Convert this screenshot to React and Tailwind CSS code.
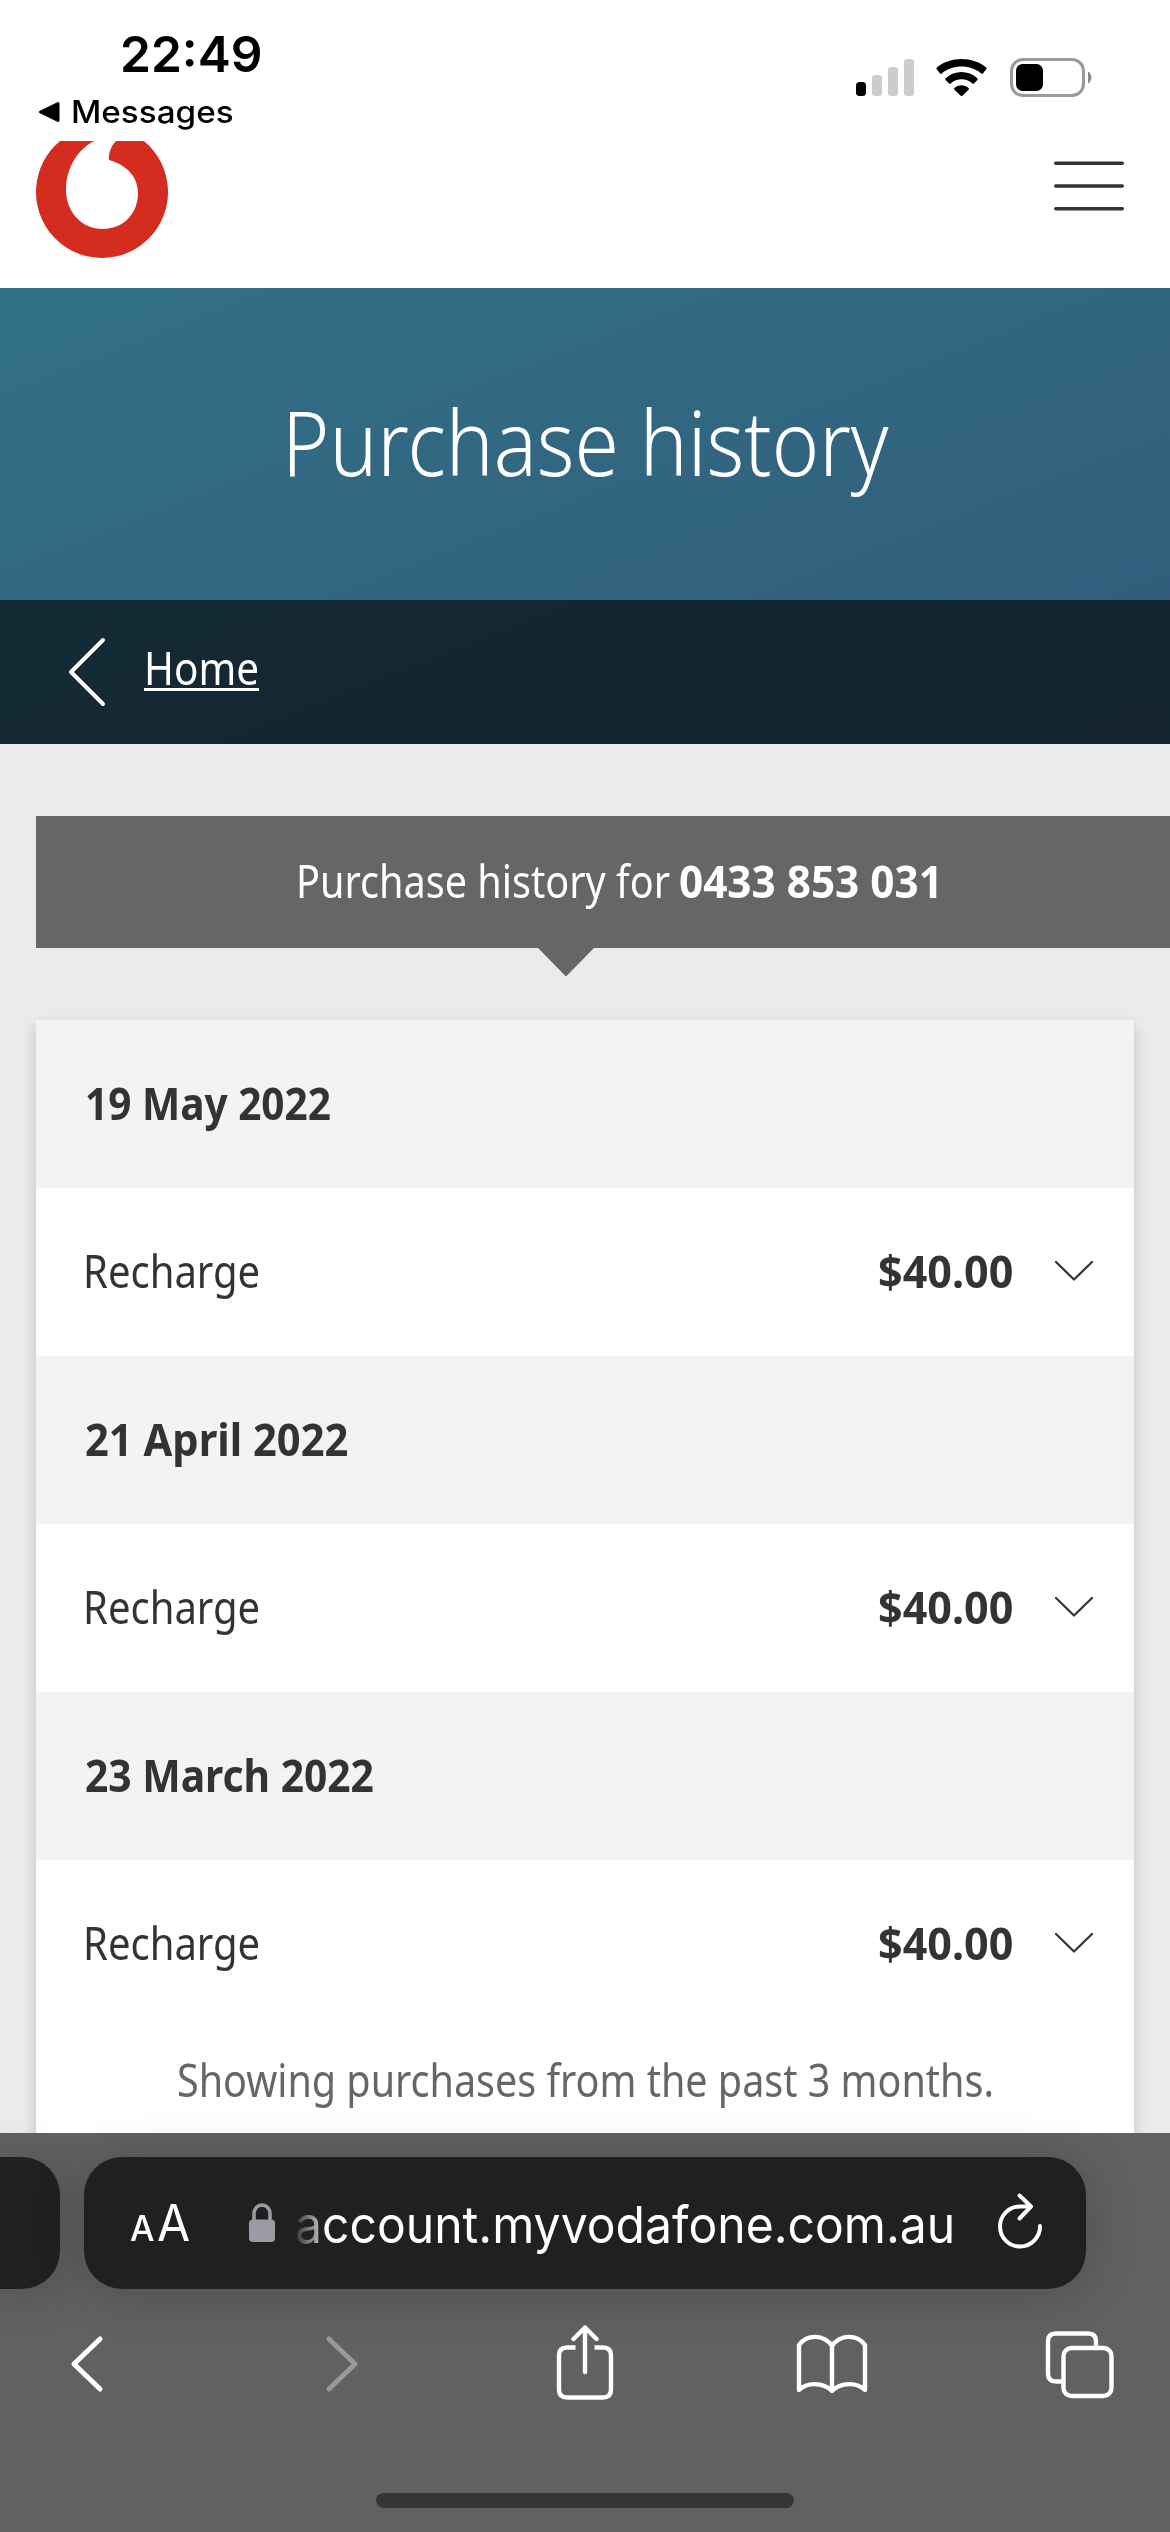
import { useLayoutEffect, useRef, useState } from "react";

/* Condenses a run of text horizontally so that it fills its box. */
function Fit({ className = "", innerClassName = "", children }) {
  const outer = useRef(null);
  const inner = useRef(null);
  const [scale, setScale] = useState(1);
  useLayoutEffect(() => {
    setScale(outer.current.clientWidth / inner.current.offsetWidth);
  }, []);
  return (
    <span ref={outer} className={`block shrink-0 ${className}`}>
      <span
        ref={inner}
        className={`inline-block origin-left whitespace-nowrap ${innerClassName}`}
        style={{ transform: `scaleX(${scale})` }}
      >
        {children}
      </span>
    </span>
  );
}

const purchases = [
  { date: "19 May 2022", dateWidth: "w-[246px]", label: "Recharge", amount: "$40.00" },
  { date: "21 April 2022", dateWidth: "w-[263px]", label: "Recharge", amount: "$40.00" },
  { date: "23 March 2022", dateWidth: "w-[289px]", label: "Recharge", amount: "$40.00" },
];

function StatusBar() {
  return (
    <div className="flex h-[141px] justify-between bg-white font-['Inter',sans-serif] text-black">
      <div className="flex flex-col pt-[24px] pl-[38px]">
        <Fit className="ml-[82px] w-[143px] text-[50px] leading-[60px] font-semibold">22:49</Fit>
        <div className="mt-[8px] flex h-[40px] items-center gap-[11px]">
          <svg width="22" height="22" viewBox="0 0 22 22">
            <path d="M2.5 11 20 2.500V19.500Z" stroke="#000" strokeWidth="3" strokeLinejoin="round" />
          </svg>
          <Fit className="w-[163px] text-[31px] leading-[40px] font-[450]">Messages</Fit>
        </div>
      </div>
      <div className="flex gap-[22px] pt-[57px] pr-[78px]">
        <svg width="58" height="40" viewBox="0 0 58 40">
          <rect x="0" y="25" width="10" height="14" rx="3.500" fill="#000" />
          <rect x="16" y="18" width="10" height="21" rx="3.500" fill="#ccc" />
          <rect x="32" y="10" width="10" height="29" rx="3.500" fill="#ccc" />
          <rect x="48" y="2" width="10" height="37" rx="3.500" fill="#ccc" />
        </svg>
        <svg width="51" height="40" viewBox="0 0 51 40">
          <path d="M.8 12.200a1.200 1.200 0 0 1 0-1.600C14-.9 37-.9 50.200 10.600a1.200 1.200 0 0 1 0 1.600l-3.300 4.200a1.200 1.200 0 0 1-1.700.1C34.500 7.200 16.500 7.200 5.800 16.500a1.200 1.200 0 0 1-1.700-.1Z" />
          <path d="M9.600 22.900a1.200 1.200 0 0 1 .1-1.700c8.800-8.200 22.800-8.200 31.600 0a1.200 1.200 0 0 1 .1 1.700l-3.400 3.600a1.200 1.200 0 0 1-1.700 0c-6.200-5.600-15.400-5.600-21.600 0a1.200 1.200 0 0 1-1.700 0Z" />
          <path d="M18.400 32.800a1.200 1.200 0 0 1 .1-1.700c4-3.700 10-3.700 14 0a1.200 1.200 0 0 1 .1 1.700l-6.200 6a1.200 1.200 0 0 1-1.700 0Z" />
        </svg>
        <svg width="83" height="41" viewBox="0 0 83 41">
          <rect x="2.500" y="2.500" width="72" height="36" rx="11.500" fill="none" stroke="#999" strokeWidth="3" />
          <rect x="7" y="7" width="27" height="27" rx="6.500" fill="#000" />
          <path d="M79 14.500a7 7 0 0 1 0 12Z" fill="#888" />
        </svg>
      </div>
    </div>
  );
}

function SiteHeader() {
  return (
    <header className="flex h-[147px] justify-between bg-white pr-[46px] pl-[36px]">
      <svg width="132" height="118" viewBox="36 141 132 118">
        <path
          d="M60.100 141A66 66 0 1 0 143.900 141H116C111 146 108.500 153 109 160C127 165 138 177 138 193C138 214 123 229 102.500 229C82 229 66 212 66 190C66 170 76 150 94.500 141Z"
          fill="#d42d20"
        />
      </svg>
      <svg className="mt-[18px]" width="70" height="54" viewBox="0 0 70 54">
        <g stroke="#333" strokeWidth="3.400" strokeLinecap="round">
          <path d="M1.700 4.300H68.300M1.700 27H68.300M1.700 49.700H68.300" />
        </g>
      </svg>
    </header>
  );
}

function Purchase({ date, dateWidth, label, amount }) {
  return (
    <section>
      <div className="flex h-[168px] items-center bg-[#f3f3f3] pb-[3px] pl-[49px]">
        <Fit className={dateWidth} innerClassName="font-bold">{date}</Fit>
      </div>
      <div className="flex h-[168px] items-center bg-white pr-[40px] pb-[3px] pl-[47px]">
        <Fit className="w-[177px]">{label}</Fit>
        <Fit className="mr-[41px] ml-auto w-[135px]" innerClassName="font-bold">{amount}</Fit>
        <svg width="40" height="22" viewBox="0 0 40 22" fill="none">
          <path d="M2 2 20 19.500 38 2" stroke="#333" strokeWidth="2.200" strokeLinecap="round" strokeLinejoin="round" />
        </svg>
      </div>
    </section>
  );
}

function BrowserBar() {
  return (
    <footer className="h-[399px] bg-[#616161] pt-[24px] font-['Inter',sans-serif]">
      <div className="flex h-[132px] gap-[24px]">
        <div className="w-[60px] rounded-r-[38px] bg-[#202020] shadow-[0_4px_50px_rgba(0,0,0,0.2)]" />
        <div className="flex w-[1002px] items-center rounded-[38px] bg-[#202020] pl-[46px] text-white shadow-[0_4px_50px_rgba(0,0,0,0.2)]">
          <div className="mt-[5px] flex w-[60px] items-baseline gap-[2px] leading-[60px]">
            <Fit className="w-[25px]" innerClassName="text-[36px] font-medium">A</Fit>
            <Fit className="w-[33px]" innerClassName="text-[51px]">A</Fit>
          </div>
          <svg className="ml-[59px]" width="26" height="40" viewBox="0 0 26 40">
            <path d="M5 18V10.500a8 8.500 0 0 1 16 0V18" fill="none" stroke="#9c9ba3" strokeWidth="3.600" />
            <rect y="16.500" width="26" height="22.500" rx="4" fill="#9c9ba3" />
          </svg>
          <Fit className="mt-[3px] ml-[20px] w-[660px] text-[51px] leading-[66px]">
            <span className="bg-linear-to-r from-[#333] to-[#ccc] bg-clip-text text-transparent">a</span>
            ccount.myvodafone.com.au
          </Fit>
          <svg className="mb-[4px] ml-[42px]" width="46" height="58" viewBox="0 0 46 58" fill="none">
            <g stroke="#fff" strokeWidth="4" strokeLinecap="round" strokeLinejoin="round">
              <path d="M43 34A20 20 0 1 1 23 14.500L33 14.500" />
              <path d="M22.500 3.500 34 14.500 22.500 26.500" />
            </g>
          </svg>
        </div>
      </div>
      <nav className="flex h-[150px] items-center pl-[69px]">
        <svg width="36" height="60" viewBox="0 0 36 60" fill="none">
          <path d="M31 5 5 30 31 55" stroke="#fff" strokeWidth="5" strokeLinecap="round" strokeLinejoin="round" />
        </svg>
        <svg className="ml-[219px]" width="36" height="60" viewBox="0 0 36 60" fill="none">
          <path d="M5 5 31 30 5 55" stroke="#999" strokeWidth="5" strokeLinecap="round" strokeLinejoin="round" />
        </svg>
        <svg className="mb-[3px] ml-[195px]" width="60" height="76" viewBox="0 0 60 76" fill="none">
          <g stroke="#fff" strokeWidth="4.400">
            <path d="M20.500 22.500H12Q4 22.500 4 30.500V64.500Q4 72.500 12 72.500H48Q56 72.500 56 64.500V30.500Q56 22.500 48 22.500H39.500" />
            <path d="M30 2.500V47M18.500 14 30 2.500 41.500 14" strokeLinecap="round" strokeLinejoin="round" />
          </g>
        </svg>
        <svg className="ml-[181px]" width="72" height="64" viewBox="0 0 72 64" fill="none">
          <path
            d="M36 14V58M36 14C28 2 11 2 3 13V58C11 50 27 50 36 59C45 50 61 50 69 58V13C61 2 44 2 36 14Z"
            stroke="#fff" strokeWidth="4.400" strokeLinecap="round" strokeLinejoin="round"
          />
        </svg>
        <svg className="ml-[177px]" width="70" height="70" viewBox="0 0 70 70" fill="none" stroke="#fff" strokeWidth="4.400">
          <path d="M19 52.500H11Q3 52.500 3 44.500V12.500Q3 4.500 11 4.500H43Q51 4.500 51 12.500V19" />
          <rect x="18.500" y="19" width="48" height="48" rx="8" />
        </svg>
      </nav>
      <div className="mx-auto mt-[54px] h-[15px] w-[418px] rounded-full bg-[#363636]" />
    </footer>
  );
}

export default function App() {
  return (
    <div className="flex h-[2532px] w-[1170px] flex-col overflow-hidden bg-[#ebebeb] font-['Noto_Sans',sans-serif] text-[45px] leading-[60px] text-[#333]">
      <StatusBar />
      <SiteHeader />
      <div className="h-[456px] bg-linear-to-br from-[#317187] to-[#315a79] text-white">
        <div className="flex h-[312px] items-center justify-center pb-[6px]">
          <h1>
            <Fit className="w-[607px] text-[90px] leading-[120px]" innerClassName="font-light">Purchase history</Fit>
          </h1>
        </div>
        <nav className="flex h-[144px] items-center bg-black/60 pl-[68px]">
          <svg width="38" height="72" viewBox="0 0 38 72" fill="none">
            <path d="M35 4 3 36 35 68" stroke="#fff" strokeWidth="4" strokeLinecap="round" strokeLinejoin="round" />
          </svg>
          <Fit className="mb-[9px] ml-[38px] w-[115px]" innerClassName="underline decoration-[3px] underline-offset-[3px]">
            Home
          </Fit>
        </nav>
      </div>
      <main className="flex h-[1389px] flex-col overflow-hidden pt-[72px] pl-[36px]">
        <div className="relative flex h-[132px] shrink-0 items-center bg-[#666] pb-[3px] pl-[260px] text-white">
          <Fit className="w-[374px]">Purchase history for</Fit>
          <Fit className="ml-[9px] w-[264px]" innerClassName="font-bold">0433 853 031</Fit>
          <svg className="absolute top-[131px] left-[502px]" width="56" height="30" viewBox="0 0 56 30">
            <path d="M0 0H56V1L28 29.500 0 1Z" fill="#666" />
          </svg>
        </div>
        <div className="mt-[72px] h-[1150px] w-[1098px] shrink-0 bg-white shadow-[0_6px_14px_rgba(0,0,0,0.18)]">
          {purchases.map((p) => (
            <Purchase key={p.date} {...p} />
          ))}
          <div className="flex h-[108px] items-center justify-center pb-[4px] text-[#666]">
            <Fit className="w-[817px]">Showing purchases from the past 3 months.</Fit>
          </div>
        </div>
      </main>
      <BrowserBar />
    </div>
  );
}
